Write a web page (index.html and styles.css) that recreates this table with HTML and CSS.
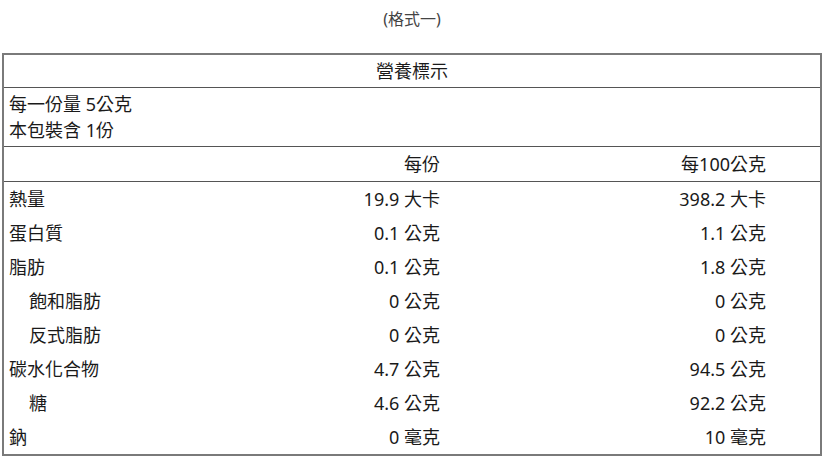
FILE: index.html
```html
<!DOCTYPE html>
<html lang="zh-Hant">
<head>
<meta charset="utf-8">
<link rel="stylesheet" href="styles.css">
</head>
<body>
<div class="page">
  <div class="format">(格式一)</div>
  <table class="nutrition">
    <colgroup>
      <col class="c-label"><col class="c-per"><col class="c-per100"><col class="c-rest">
    </colgroup>
    <thead>
      <tr class="title-row"><th colspan="4">營養標示</th></tr>
    </thead>
    <tbody>
      <tr class="serving-row"><td colspan="4">每一份量 5公克<br>本包裝含 1份</td></tr>
      <tr class="head-row"><td></td><td class="num">每份</td><td class="num">每100公克</td><td></td></tr>
      <tr class="first"><td>熱量</td><td class="num">19.9 大卡</td><td class="num">398.2 大卡</td><td></td></tr>
      <tr><td>蛋白質</td><td class="num">0.1 公克</td><td class="num">1.1 公克</td><td></td></tr>
      <tr><td>脂肪</td><td class="num">0.1 公克</td><td class="num">1.8 公克</td><td></td></tr>
      <tr><td class="sub">飽和脂肪</td><td class="num">0 公克</td><td class="num">0 公克</td><td></td></tr>
      <tr><td class="sub">反式脂肪</td><td class="num">0 公克</td><td class="num">0 公克</td><td></td></tr>
      <tr><td>碳水化合物</td><td class="num">4.7 公克</td><td class="num">94.5 公克</td><td></td></tr>
      <tr><td class="sub">糖</td><td class="num">4.6 公克</td><td class="num">92.2 公克</td><td></td></tr>
      <tr><td>鈉</td><td class="num">0 毫克</td><td class="num">10 毫克</td><td></td></tr>
    </tbody>
  </table>
</div>
</body>
</html>
```
FILE: styles.css
```css
html, body {
  margin: 0;
  padding: 0;
  background: #ffffff;
}
body {
  font-family: "Noto Sans", "Noto Sans CJK TC", sans-serif;
  color: #1a1a1a;
}
.page {
  padding: 0 9px 0 2px;
}
.format {
  text-align: center;
  font-size: 16px;
  line-height: 20px;
  color: #444;
  padding: 9px 0 0 0;
  height: 53px;
  box-sizing: border-box;
}
.nutrition {
  width: 820px;
  border-collapse: collapse;
  border: 2px solid #7a7a7a;
  table-layout: fixed;
  font-size: 18px;
}
.c-label { width: 297px; }
.c-per { width: 140px; }
.c-per100 { width: 326px; }
.c-rest { width: auto; }
.nutrition th,
.nutrition td {
  padding: 4px 0 4px 5px;
  line-height: 26px;
  font-weight: normal;
  vertical-align: middle;
}
.nutrition td.num {
  text-align: right;
  padding-left: 0;
  padding-right: 0;
}
.title-row th {
  text-align: center;
  height: 26px;
  padding: 3px 0 3px 0;
  border-bottom: 1px solid #555;
}
.serving-row td {
  padding: 3px 0 3px 5px;
  border-bottom: 1px solid #555;
}
.head-row td {
  padding: 4px 0 4px 5px;
  border-bottom: 1px solid #555;
}
.nutrition td.sub {
  padding-left: 25px;
}
```
